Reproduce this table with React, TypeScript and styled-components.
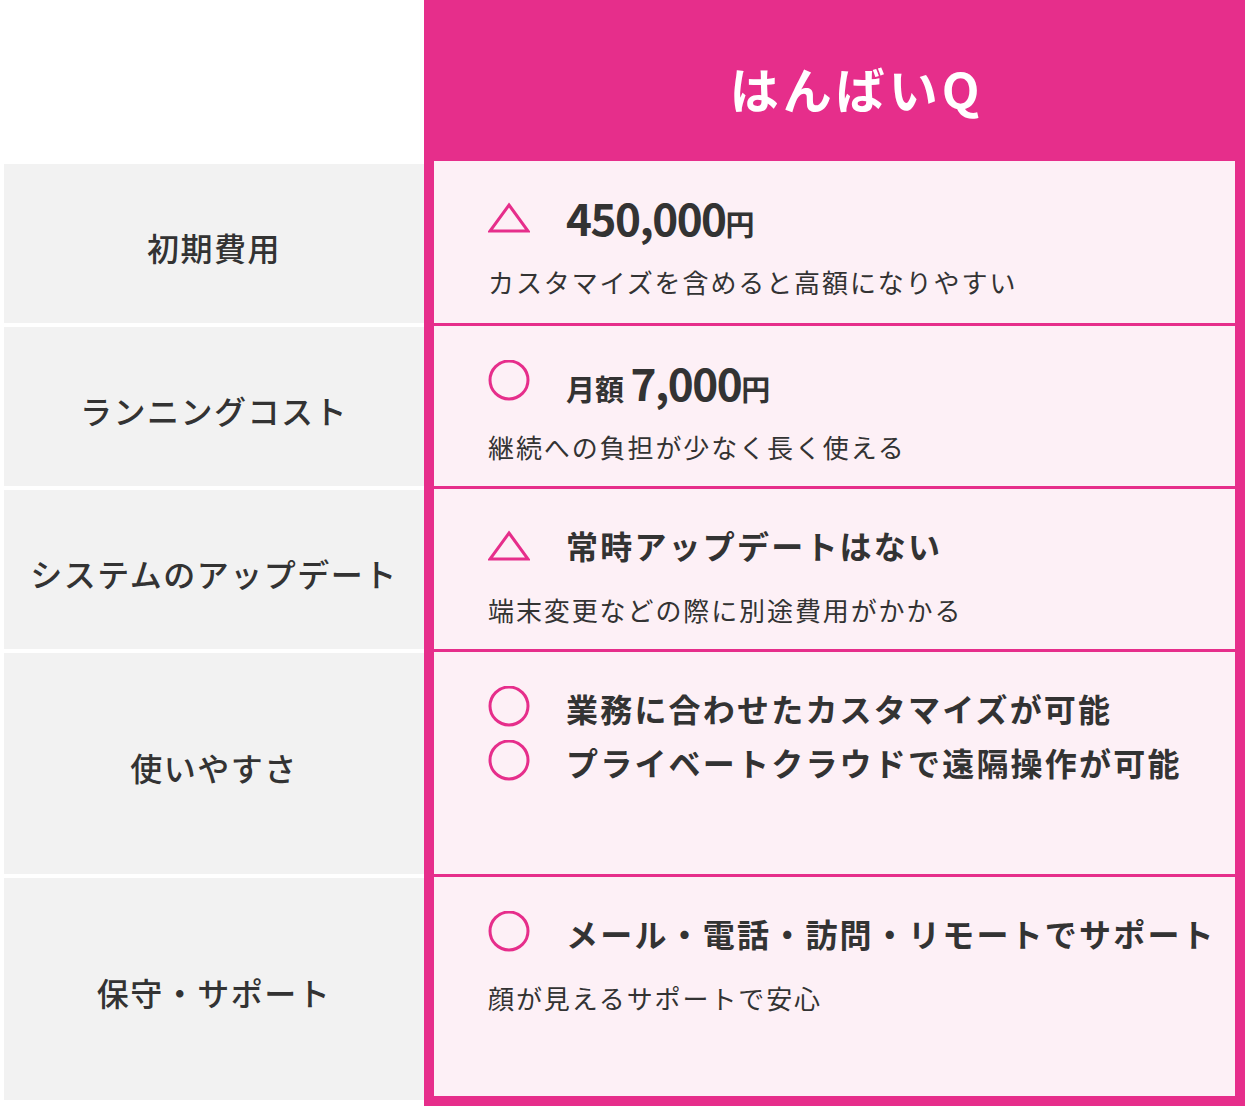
import React from "react";
import styled, { createGlobalStyle } from "styled-components";

const PINK = "#e62e8b";

const GlobalStyle = createGlobalStyle`
  html, body {
    margin: 0;
    padding: 0;
    background: #ffffff;
  }
  body {
    font-family: "Noto Sans CJK JP", "Noto Sans", sans-serif;
    color: #333333;
  }
`;

const Table = styled.div`
  display: flex;
  width: 1245px;
  padding-left: 4px;
  box-sizing: border-box;
`;

const LabelColumn = styled.div`
  width: 420px;
  padding-top: 164px;
  display: flex;
  flex-direction: column;
  gap: 4px;
`;

const Label = styled.div<{ $h: number }>`
  height: ${p => p.$h}px;
  background: #f2f2f2;
  display: flex;
  align-items: center;
  justify-content: center;
  font-size: 32px;
  font-weight: 500;
  letter-spacing: 1.5px;
  padding-top: 6px;
  box-sizing: border-box;
`;

const ProductColumn = styled.div`
  width: 821px;
  background: ${PINK};
  padding: 0 10px 10px;
  box-sizing: border-box;
  display: flex;
  flex-direction: column;
  gap: 3px;
`;

const Header = styled.div`
  height: 158px;
  display: flex;
  align-items: center;
  justify-content: center;
  padding: 16px 0 0 44px;
  box-sizing: border-box;
  color: #ffffff;
  font-size: 49px;
  font-weight: 700;
  letter-spacing: 4px;
`;

const Cell = styled.div<{ $h: number }>`
  height: ${p => p.$h}px;
  background: #fdf0f6;
  padding: 34px 0 0 54px;
  box-sizing: border-box;
`;

const Point = styled.div`
  display: flex;
  align-items: center;
  gap: 36px;
  height: 42px;
  & + & {
    margin-top: 12px;
  }
`;

const Mark = styled.svg`
  width: 42px;
  height: 42px;
  flex: none;
`;

const Main = styled.span`
  font-size: 32px;
  font-weight: 700;
  letter-spacing: 2.2px;
  white-space: nowrap;
  display: flex;
  align-items: baseline;
  margin-top: 1px;
`;

const Big = styled.span`
  font-size: 44px;
  letter-spacing: -1.5px;
`;

const Small = styled.span`
  font-size: 29px;
  letter-spacing: 0;
`;

const Note = styled.p`
  margin: 30px 0 0;
  font-size: 26px;
  line-height: 30px;
  font-weight: 400;
  letter-spacing: 1.9px;
  white-space: nowrap;
`;

const Triangle = () => (
  <Mark viewBox="0 0 42 42">
    <polygon points="21,10 40,36 2,36" fill="none" stroke={PINK} strokeWidth="3" />
  </Mark>
);

const Circle = () => (
  <Mark viewBox="0 0 42 42">
    <circle cx="21" cy="20" r="19" fill="none" stroke={PINK} strokeWidth="3" />
  </Mark>
);

const rows = [
  { label: "初期費用", lh: 159, ch: 162 },
  { label: "ランニングコスト", lh: 159, ch: 160 },
  { label: "システムのアップデート", lh: 159, ch: 160 },
  { label: "使いやすさ", lh: 221, ch: 222 },
  { label: "保守・サポート", lh: 222, ch: 219 },
];

const App = () => (
  <>
    <GlobalStyle />
    <Table>
      <LabelColumn>
        {rows.map(r => (
          <Label key={r.label} $h={r.lh}>
            {r.label}
          </Label>
        ))}
      </LabelColumn>
      <ProductColumn>
        <Header>はんばいQ</Header>
        <Cell $h={rows[0].ch}>
          <Point>
            <Triangle />
            <Main>
              <Big>450,000</Big>
              <Small>円</Small>
            </Main>
          </Point>
          <Note>カスタマイズを含めると高額になりやすい</Note>
        </Cell>
        <Cell $h={rows[1].ch}>
          <Point>
            <Circle />
            <Main>
              <Small>月額&nbsp;</Small>
              <Big>7,000</Big>
              <Small>円</Small>
            </Main>
          </Point>
          <Note>継続への負担が少なく長く使える</Note>
        </Cell>
        <Cell $h={rows[2].ch}>
          <Point>
            <Triangle />
            <Main>常時アップデートはない</Main>
          </Point>
          <Note>端末変更などの際に別途費用がかかる</Note>
        </Cell>
        <Cell $h={rows[3].ch}>
          <Point>
            <Circle />
            <Main>業務に合わせたカスタマイズが可能</Main>
          </Point>
          <Point>
            <Circle />
            <Main>プライベートクラウドで遠隔操作が可能</Main>
          </Point>
        </Cell>
        <Cell $h={rows[4].ch}>
          <Point>
            <Circle />
            <Main>メール・電話・訪問・リモートでサポート</Main>
          </Point>
          <Note>顔が見えるサポートで安心</Note>
        </Cell>
      </ProductColumn>
    </Table>
  </>
);

export default App;
